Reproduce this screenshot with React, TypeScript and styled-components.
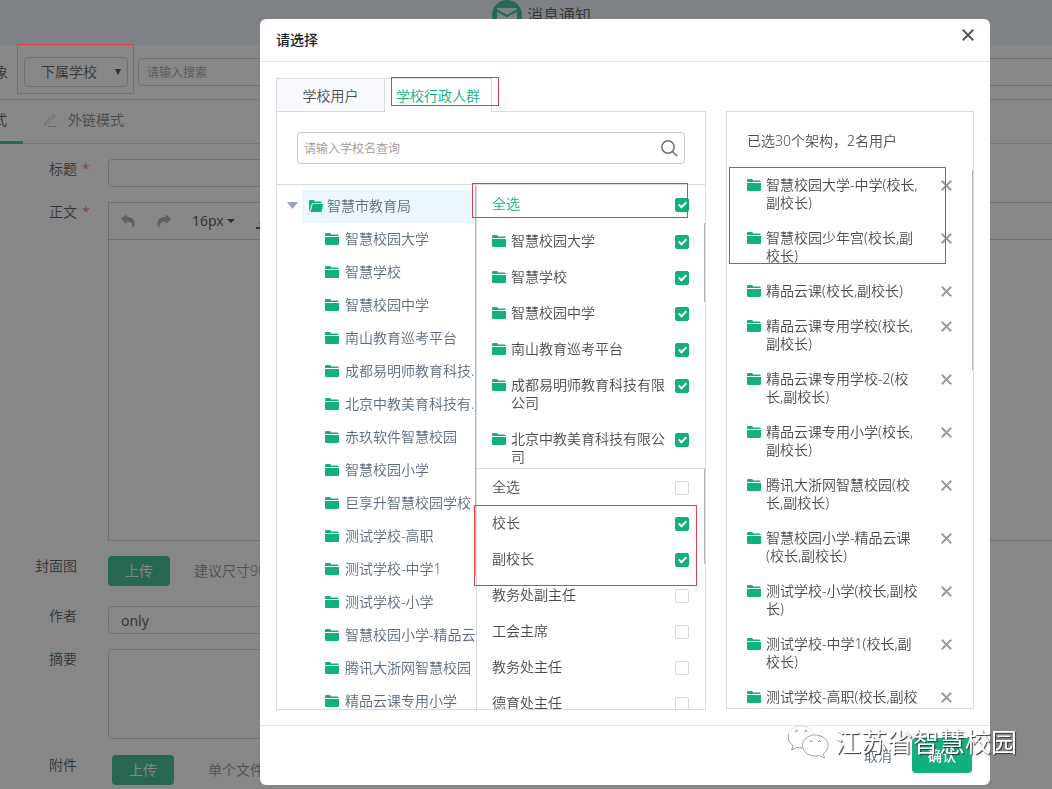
import React from "react";
import styled, { createGlobalStyle } from "styled-components";

const GREEN = "#10b07f";
const LINE = "#d8dbe0";
const FIELD_LINE = "#c4c4c4";

const GlobalStyle = createGlobalStyle`
  *, *::before, *::after { box-sizing: border-box; }
  html, body, #root { height: 100%; }
  body {
    margin: 0;
    overflow: hidden;
    background: #fff;
    font-family: "Noto Sans", "Noto Sans CJK SC", sans-serif;
    font-size: 14px;
    font-weight: 350;
    line-height: 18px;
    color: #4c4c4c;
  }
  button, input, textarea, select { font: inherit; color: inherit; }
  button { border: 0; padding: 0; background: none; cursor: pointer; }
  ul { list-style: none; margin: 0; padding: 0; }
`;

/* ---------- page behind the dialog ---------- */

const Page = styled.div`
  height: 100vh;
  overflow: hidden;
  background: #fff;
  color: #333;
`;

const Banner = styled.header`
  height: 45px;
  display: flex;
  justify-content: center;
  align-items: flex-start;
  gap: 5px;
  padding-left: 31px;
  background: #e8f0fa;
  font-size: 16px;
  line-height: 30px;
`;

const TargetBar = styled.div`
  height: 55px;
  display: flex;
  align-items: center;
  border-bottom: 1px solid #d4d4d4;
  margin-right: -8px;
`;

const CutLabel = styled.label`
  width: 30px;
  margin-left: -6px;
`;

const SelectBox = styled.div`
  position: relative;
  width: 104px;
  margin-right: 10px;
  svg { position: absolute; right: 6px; top: 11px; pointer-events: none; }
`;

const Select = styled.select`
  appearance: none;
  width: 100%;
  height: 30px;
  padding: 0 16px;
  border: 1px solid ${FIELD_LINE};
  border-radius: 4px;
  background: transparent;
`;

const Field = styled.input`
  height: 28px;
  width: 100%;
  padding: 0 12px;
  border: 1px solid ${FIELD_LINE};
  border-radius: 4px;
  background: transparent;
  font-weight: 400;
`;

const TargetSearch = styled(Field)`
  flex: 1;
  padding: 0 8px;
  font-size: 12px;
  &::placeholder { color: #999; opacity: 1; }
`;

const ModeTabs = styled.nav`
  height: 44px;
  display: flex;
  border-bottom: 1px solid #d4d4d4;
`;

const ModeTab = styled.button<{ $active?: boolean }>`
  display: flex;
  align-items: center;
  gap: 10px;
  height: 44px;
  margin-left: ${(p) => (p.$active ? "-7px" : "20px")};
  padding-right: ${(p) => (p.$active ? "16px" : "0")};
  padding-bottom: 1px;
  border-bottom: 3px solid ${(p) => (p.$active ? GREEN : "transparent")};
  color: ${(p) => (p.$active ? "#222" : "#666")};
`;

const Form = styled.form`
  display: flex;
  flex-direction: column;
  gap: 15px;
  padding-top: 15px;
`;

const FormRow = styled.div<{ $bleed?: boolean; $after?: string }>`
  display: grid;
  grid-template-columns: 77px minmax(0, 1fr);
  column-gap: 31px;
  margin-right: ${(p) => (p.$bleed ? "-8px" : "80px")};
  margin-bottom: ${(p) => p.$after || "0"};
`;

const Label = styled.label`
  display: flex;
  justify-content: flex-end;
  height: 20px;
  line-height: 20px;
  white-space: nowrap;
`;

const Star = styled.span`
  width: 0;
  overflow: visible;
  text-indent: 5px;
  color: #e0344a;
`;

const Editor = styled.div`
  height: 339px;
  border: 1px solid ${FIELD_LINE};
`;

const EditorBar = styled.div`
  height: 37px;
  display: flex;
  align-items: center;
  padding-left: 12px;
  border-bottom: 1px solid ${FIELD_LINE};
  font-weight: 400;
`;

const ToolButton = styled.button<{ $gap: string }>`
  display: flex;
  align-items: center;
  gap: 3px;
  margin-right: ${(p) => p.$gap};
`;

const UploadLine = styled.div<{ $indent?: boolean }>`
  display: flex;
  align-items: center;
  gap: ${(p) => (p.$indent ? "34px" : "24px")};
  padding-left: ${(p) => (p.$indent ? "4px" : "0")};
  color: #777;
`;

const Upload = styled.button`
  width: 62px;
  height: 30px;
  border-radius: 4px;
  background: ${GREEN};
  color: #fff;
`;

const Summary = styled.textarea`
  display: block;
  width: 100%;
  height: 90px;
  border: 1px solid ${FIELD_LINE};
  border-radius: 4px;
  background: transparent;
  resize: none;
`;

/* ---------- dialog ---------- */

const Overlay = styled.div`
  position: fixed;
  inset: 0;
  display: flex;
  padding: 19px 62px 4px 260px;
  background: rgba(55, 55, 55, 0.6);
`;

const Dialog = styled.section`
  flex: 1;
  min-width: 0;
  display: flex;
  flex-direction: column;
  border-radius: 6px;
  background: #fff;
`;

const DialogHead = styled.header`
  height: 43px;
  flex: none;
  display: flex;
  justify-content: space-between;
  padding: 0 16px;
  border-bottom: 1px solid #e3e5e9;
`;

const DialogTitle = styled.h2`
  margin: 0;
  font-size: 14px;
  font-weight: 500;
  line-height: 42px;
  color: #1c1f2e;
`;

const CloseButton = styled.button`
  display: flex;
  align-items: center;
  height: 32px;
`;

const DialogBody = styled.div`
  flex: 1;
  min-height: 0;
  display: flex;
  gap: 20px;
  padding: 16px 16px 15px;
`;

const SourceColumn = styled.div`
  flex: 1;
  min-width: 0;
  display: flex;
  flex-direction: column;
`;

const Tabs = styled.div`
  display: flex;
  flex: none;
  height: 33px;
`;

const Tab = styled.button<{ $active?: boolean }>`
  position: relative;
  width: ${(p) => (p.$active ? "107px" : "109px")};
  height: ${(p) => (p.$active ? "34px" : "33px")};
  padding-top: ${(p) => (p.$active ? "0" : "1px")};
  border: 1px solid ${LINE};
  border-bottom: 0;
  border-left-width: ${(p) => (p.$active ? "0" : "1px")};
  background: ${(p) => (p.$active ? "#fff" : "#f8f9fc")};
  color: ${(p) => (p.$active ? GREEN : "#4c4c4c")};
`;

const Panel = styled.div`
  flex: 1;
  min-height: 0;
  display: flex;
  flex-direction: column;
  border: 1px solid ${LINE};
`;

const SearchArea = styled.div`
  flex: none;
  padding: 20px;
  border-bottom: 1px solid ${LINE};
`;

const SearchBox = styled.div`
  display: flex;
  align-items: center;
  height: 32px;
  padding: 0 6px;
  border: 1px solid #c3c6cc;
  border-radius: 4px;
  input {
    flex: 1;
    min-width: 0;
    border: 0;
    padding: 1px 0 0;
    outline: 0;
    font-size: 12px;
    &::placeholder { color: #999; opacity: 1; }
  }
  button { display: flex; }
`;

const Columns = styled.div`
  flex: 1;
  min-height: 0;
  display: flex;
`;

const Scroller = styled.div<{ $height?: string }>`
  position: relative;
  overflow: hidden;
  min-height: 0;
  flex: ${(p) => (p.$height ? "none" : "1")};
  height: ${(p) => p.$height || "auto"};
`;

const Thumb = styled.span<{ $length: string }>`
  position: absolute;
  top: 0;
  right: 0;
  width: 1px;
  height: ${(p) => p.$length};
  background: #b4b7bc;
`;

const TreeColumn = styled.div`
  width: 200px;
  flex: none;
  display: flex;
  border-right: 1px solid ${LINE};
`;

const FolderBox = styled.svg`
  flex: none;
  margin-top: 3px;
`;

const Tree = styled.ul`
  padding: 5px 0 0 25px;
  color: #5d6b7c;
`;

const TreeNode = styled.li<{ $root?: boolean }>`
  position: relative;
  display: flex;
  align-items: center;
  gap: ${(p) => (p.$root ? "4px" : "6px")};
  height: 33px;
  padding: 0 0 2px ${(p) => (p.$root ? "7px" : "23px")};
  background: ${(p) => (p.$root ? "#eaf7fe" : "transparent")};
  white-space: nowrap;
  svg { flex: none; }
  ${FolderBox} { margin-top: 1px; }
`;

const Toggle = styled.button`
  position: absolute;
  left: -15px;
  top: 12px;
  display: flex;
`;

const PickColumn = styled.div`
  flex: 1;
  min-width: 0;
  display: flex;
  flex-direction: column;
`;

const PickRow = styled.label<{ $head?: boolean }>`
  display: flex;
  align-items: flex-start;
  gap: 5px;
  padding: ${(p) => (p.$head ? "10px 16px 10px 15px" : "9px 16px 9px 15px")};
  color: ${(p) => (p.$head ? GREEN : "#4c4c4c")};
  > span { flex: 1; }
`;

const Check = styled.input`
  appearance: none;
  flex: none;
  width: 14px;
  height: 14px;
  margin: 3px 0 0;
  display: grid;
  place-items: center;
  border: 1px solid #d5d8dd;
  border-radius: 2px;
  background: #fff;
  &:checked { border-color: ${GREEN}; background: ${GREEN}; }
  &:checked::after {
    content: "";
    width: 5px;
    height: 8px;
    margin-bottom: 2px;
    border: solid #fff;
    border-width: 0 2px 2px 0;
    transform: rotate(45deg);
  }
`;

const Divider = styled.hr`
  flex: none;
  width: 100%;
  height: 1px;
  margin: 0;
  border: 0;
  background: ${LINE};
`;

const ChosenPanel = styled(Panel)`
  flex: none;
  width: 248px;
  margin: 33px 0 1px;
  min-height: 0;
`;

const ChosenCount = styled.p`
  flex: none;
  margin: 0;
  padding-left: 20px;
  line-height: 58px;
`;

const ChosenList = styled.ul`
  padding: 6px 20px 0;
`;

const ChosenItem = styled.li`
  display: flex;
  align-items: flex-start;
  gap: 5px;
  margin-bottom: 17px;
  > span { width: 158px; }
  button { display: flex; margin: 4px 0 0 12px; }
`;

const DialogFoot = styled.footer`
  flex: none;
  height: 60px;
  display: flex;
  justify-content: flex-end;
  align-items: center;
  gap: 20px;
  padding-right: 18px;
  border-top: 1px solid #e3e5e9;
`;

const Cancel = styled.button`
  color: #5d6b7c;
`;

const Confirm = styled.button`
  width: 60px;
  height: 35px;
  border-radius: 4px;
  background: ${GREEN};
  color: #fff;
  font-weight: 500;
`;

/* ---------- marks and watermark drawn over everything ---------- */

const Mark = styled.div<{ $x: number; $y: number; $w: number; $h: number }>`
  position: fixed;
  left: ${(p) => p.$x}px;
  top: ${(p) => p.$y}px;
  width: ${(p) => p.$w}px;
  height: ${(p) => p.$h}px;
  border: 1px solid #d8434e;
  pointer-events: none;
`;

const Watermark = styled.div`
  position: fixed;
  right: 35px;
  bottom: 28px;
  display: flex;
  align-items: center;
  gap: 6px;
  font-size: 26px;
  font-weight: 400;
  line-height: 38px;
  color: #fff;
  text-shadow: 1px 1px 1px #333;
  pointer-events: none;
`;

/* ---------- icons ---------- */

const Folder = () => (
  <FolderBox width="14" height="12" viewBox="0 0 14 12" fill={GREEN} aria-hidden="true">
    <path d="M0 3V1Q0 0 1 0H4.6Q5.4 0 5.8 .8L6.2 1.5H12.6Q13.6 1.5 13.6 2.5V3Z" />
    <path d="M0 4H14V10.8Q14 12 12.8 12H1.2Q0 12 0 10.8Z" />
  </FolderBox>
);

const OpenFolder = () => (
  <svg width="14" height="12" viewBox="0 0 14 12" aria-hidden="true">
    <path d="M0 11V1Q0 0 1 0H4.6L6 1.6H11.6Q12.6 1.6 12.6 2.6V4H3L.8 11Z" fill={GREEN} />
    <path d="M3.8 4H14L13 11Q12.8 12 11.8 12H1.4Z" fill={GREEN} />
    <path d="M12.8 3.5H3.2L.9 11.4" fill="none" stroke="#f3dcae" strokeWidth=".9" />
  </svg>
);

const Cross = ({ size, color, weight }: { size: number; color: string; weight: number }) => (
  <svg width={size} height={size} viewBox="0 0 12 12" fill="none" stroke={color} strokeWidth={weight} aria-hidden="true">
    <path d="M.8 .8L11.2 11.2M11.2 .8L.8 11.2" />
  </svg>
);

const Mail = () => (
  <svg width="30" height="30" viewBox="0 0 30 30" aria-hidden="true">
    <circle cx="15" cy="15" r="15" fill={GREEN} />
    <path d="M5 8H25V22H5Z" fill="#e8f0fa" />
    <path d="M5 10.5L15 16L25 10.5" fill="none" stroke={GREEN} strokeWidth="2" />
  </svg>
);

const Reply = ({ flip }: { flip?: boolean }) => (
  <svg width="14" height="14" viewBox="0 0 14 14" fill="#9b9b9b" aria-hidden="true">
    <path
      transform={flip ? "matrix(-1 0 0 1 14 0)" : undefined}
      d="M0 5L5.4 0V3C10.5 3 13.6 5 13.6 9.2C13.6 11 13 12.6 11.6 14C12 9.400 10 7.400 5.400 7.400V10.200Z"
    />
  </svg>
);

const WeChat = () => (
  <svg width="42" height="34" viewBox="0 0 42 34" fill="#fff" stroke="#999" strokeWidth=".9" aria-hidden="true">
    <path d="M14 1C6.500 1 1 5.700 1 12C1 15.600 3 18.500 6 20.600L4.600 25L9.700 22.300C11.200 22.700 12.600 22.900 14 22.900C21.500 22.900 27.500 18 27.500 12C27.500 5.700 21.500 1 14 1Z" stroke="#ddd" />
    <path d="M1.500 9C.6 14 2.500 18.300 6 20.600L4.600 25L9.700 22.300C11.500 22.800 13 22.900 15 22.900" fill="none" />
    <path d="M28 10C21 10 15.500 14.600 15.500 20.500C15.500 26.400 21 31 28 31C29.500 31 31 30.800 32.300 30.300L37.500 33L36.300 28.800C39 26.800 41 24 41 20.500C41 14.600 35 10 28 10Z" />
    <g fill="none" stroke="#666">
      <path d="M7.800 6.800Q9.300 4.300 10.800 6.300" /><path d="M17.300 6.800Q18.800 4.300 20.300 6.300" />
      <path d="M22.500 17Q23.800 14.800 25.200 16.600" /><path d="M31 17Q32.300 14.800 33.700 16.600" />
    </g>
  </svg>
);

/* ---------- data ---------- */

const treeNodes = [
  "智慧校园大学", "智慧学校", "智慧校园中学", "南山教育巡考平台", "成都易明师教育科技...",
  "北京中教美育科技有...", "赤玖软件智慧校园", "智慧校园小学", "巨享升智慧校园学校",
  "测试学校-高职", "测试学校-中学1", "测试学校-小学", "智慧校园小学-精品云", "腾讯大浙网智慧校园",
  "精品云课专用小学",
];

const schools = [
  "智慧校园大学", "智慧学校", "智慧校园中学", "南山教育巡考平台",
  "成都易明师教育科技有限公司", "北京中教美育科技有限公司",
];

const roles: [string, boolean][] = [
  ["全选", false], ["校长", true], ["副校长", true], ["教务处副主任", false],
  ["工会主席", false], ["教务处主任", false], ["德育处主任", false],
];

const chosen = [
  "智慧校园大学-中学(校长,副校长)", "智慧校园少年宫(校长,副校长)", "精品云课(校长,副校长)",
  "精品云课专用学校(校长,副校长)", "精品云课专用学校-2(校长,副校长)", "精品云课专用小学(校长,副校长)",
  "腾讯大浙网智慧校园(校长,副校长)", "智慧校园小学-精品云课(校长,副校长)", "测试学校-小学(校长,副校长)",
  "测试学校-中学1(校长,副校长)", "测试学校-高职(校长,副校长)",
];

const marks = [
  [17, 44, 117, 50], [391, 77, 108, 29], [472, 183, 216, 35], [474, 505, 223, 81], [729, 167, 217, 97],
];

export default function App() {
  return (
    <>
      <GlobalStyle />
      <Page>
        <Banner><Mail />消息通知</Banner>
        <TargetBar>
          <CutLabel htmlFor="target">象</CutLabel>
          <SelectBox>
            <Select id="target"><option>下属学校</option></Select>
            <svg width="8" height="8" viewBox="0 0 8 8"><path d="M1 1H7L4 7Z" fill="#222" /></svg>
          </SelectBox>
          <TargetSearch placeholder="请输入搜索" aria-label="搜索" />
        </TargetBar>
        <ModeTabs>
          <ModeTab $active>式</ModeTab>
          <ModeTab>
            <svg width="15" height="14" viewBox="0 0 15 14" fill="none" stroke="#bbb">
              <path d="M2 10.500L10.500 1.500L12 3L4 11.500L1.500 12ZM5 13.500H14" />
            </svg>
            外链模式
          </ModeTab>
        </ModeTabs>
        <Form>
          <FormRow>
            <Label htmlFor="title">标题<Star>*</Star></Label>
            <Field id="title" />
          </FormRow>
          <FormRow $bleed>
            <Label>正文<Star>*</Star></Label>
            <Editor>
              <EditorBar>
                <ToolButton type="button" $gap="22px" aria-label="撤销"><Reply /></ToolButton>
                <ToolButton type="button" $gap="21px" aria-label="重做"><Reply flip /></ToolButton>
                <ToolButton type="button" $gap="21px">
                  16px
                  <svg width="8" height="4" viewBox="0 0 8 4"><path d="M0 0H8L4 4Z" fill="#222" /></svg>
                </ToolButton>
                <ToolButton type="button" $gap="0" aria-label="文字颜色">
                  <svg width="16" height="16" viewBox="0 0 16 16" fill="none" stroke="#333" strokeWidth="2">
                    <path d="M0 15H16" /><path d="M4 11L8 1L12 11M5.500 8H10.500" strokeWidth="1.500" />
                  </svg>
                </ToolButton>
              </EditorBar>
            </Editor>
          </FormRow>
          <FormRow $after="5px">
            <Label htmlFor="cover">封面图</Label>
            <UploadLine><Upload id="cover" type="button">上传</Upload>建议尺寸900*500</UploadLine>
          </FormRow>
          <FormRow>
            <Label htmlFor="author">作者</Label>
            <Field id="author" defaultValue="only" />
          </FormRow>
          <FormRow $after="1px">
            <Label htmlFor="summary">摘要</Label>
            <Summary id="summary" />
          </FormRow>
          <FormRow>
            <Label htmlFor="attach">附件</Label>
            <UploadLine $indent><Upload id="attach" type="button">上传</Upload>单个文件</UploadLine>
          </FormRow>
        </Form>
      </Page>

      <Overlay>
        <Dialog role="dialog" aria-labelledby="dialog-title">
          <DialogHead>
            <DialogTitle id="dialog-title">请选择</DialogTitle>
            <CloseButton aria-label="关闭"><Cross size={12} color="#555" weight={2} /></CloseButton>
          </DialogHead>
          <DialogBody>
            <SourceColumn>
              <Tabs>
                <Tab>学校用户</Tab>
                <Tab $active>学校行政人群</Tab>
              </Tabs>
              <Panel>
                <SearchArea>
                  <SearchBox>
                    <input placeholder="请输入学校名查询" aria-label="学校名" />
                    <button aria-label="查询">
                      <svg width="17" height="17" viewBox="0 0 17 17" fill="none" stroke="#6b6f76" strokeWidth="1.500">
                        <circle cx="7" cy="7" r="6.200" /><path d="M11.500 11.500L16.200 16.200" />
                      </svg>
                    </button>
                  </SearchBox>
                </SearchArea>
                <Columns>
                  <TreeColumn>
                    <Scroller>
                      <Tree>
                        <TreeNode $root>
                          <Toggle aria-label="收起">
                            <svg width="11" height="7" viewBox="0 0 11 7"><path d="M0 0H11L5.500 7Z" fill="#9aa3b8" /></svg>
                          </Toggle>
                          <OpenFolder />智慧市教育局
                        </TreeNode>
                        {treeNodes.map((name) => (
                          <TreeNode key={name}><Folder />{name}</TreeNode>
                        ))}
                      </Tree>
                      <Thumb $length="391px" />
                    </Scroller>
                  </TreeColumn>
                  <PickColumn>
                    <PickRow $head><span>全选</span><Check type="checkbox" defaultChecked /></PickRow>
                    <Scroller $height="245px">
                      {schools.map((name) => (
                        <PickRow key={name}>
                          <Folder /><span>{name}</span><Check type="checkbox" defaultChecked />
                        </PickRow>
                      ))}
                      <Thumb $length="79px" />
                    </Scroller>
                    <Divider />
                    <Scroller>
                      {roles.map(([name, on]) => (
                        <PickRow key={name}><span>{name}</span><Check type="checkbox" defaultChecked={on} /></PickRow>
                      ))}
                      <Thumb $length="95px" />
                    </Scroller>
                  </PickColumn>
                </Columns>
              </Panel>
            </SourceColumn>
            <ChosenPanel>
              <ChosenCount>已选30个架构，2名用户</ChosenCount>
              <Scroller>
                <ChosenList>
                  {chosen.map((name) => (
                    <ChosenItem key={name}>
                      <Folder /><span>{name}</span>
                      <button aria-label="移除"><Cross size={11} color="#999" weight={2} /></button>
                    </ChosenItem>
                  ))}
                </ChosenList>
                <Thumb $length="200px" />
              </Scroller>
            </ChosenPanel>
          </DialogBody>
          <DialogFoot>
            <Cancel>取消</Cancel>
            <Confirm>确认</Confirm>
          </DialogFoot>
        </Dialog>
      </Overlay>

      {marks.map(([x, y, w, h]) => (
        <Mark key={y} $x={x} $y={y} $w={w} $h={h} />
      ))}
      <Watermark><WeChat />江苏省智慧校园</Watermark>
    </>
  );
}
